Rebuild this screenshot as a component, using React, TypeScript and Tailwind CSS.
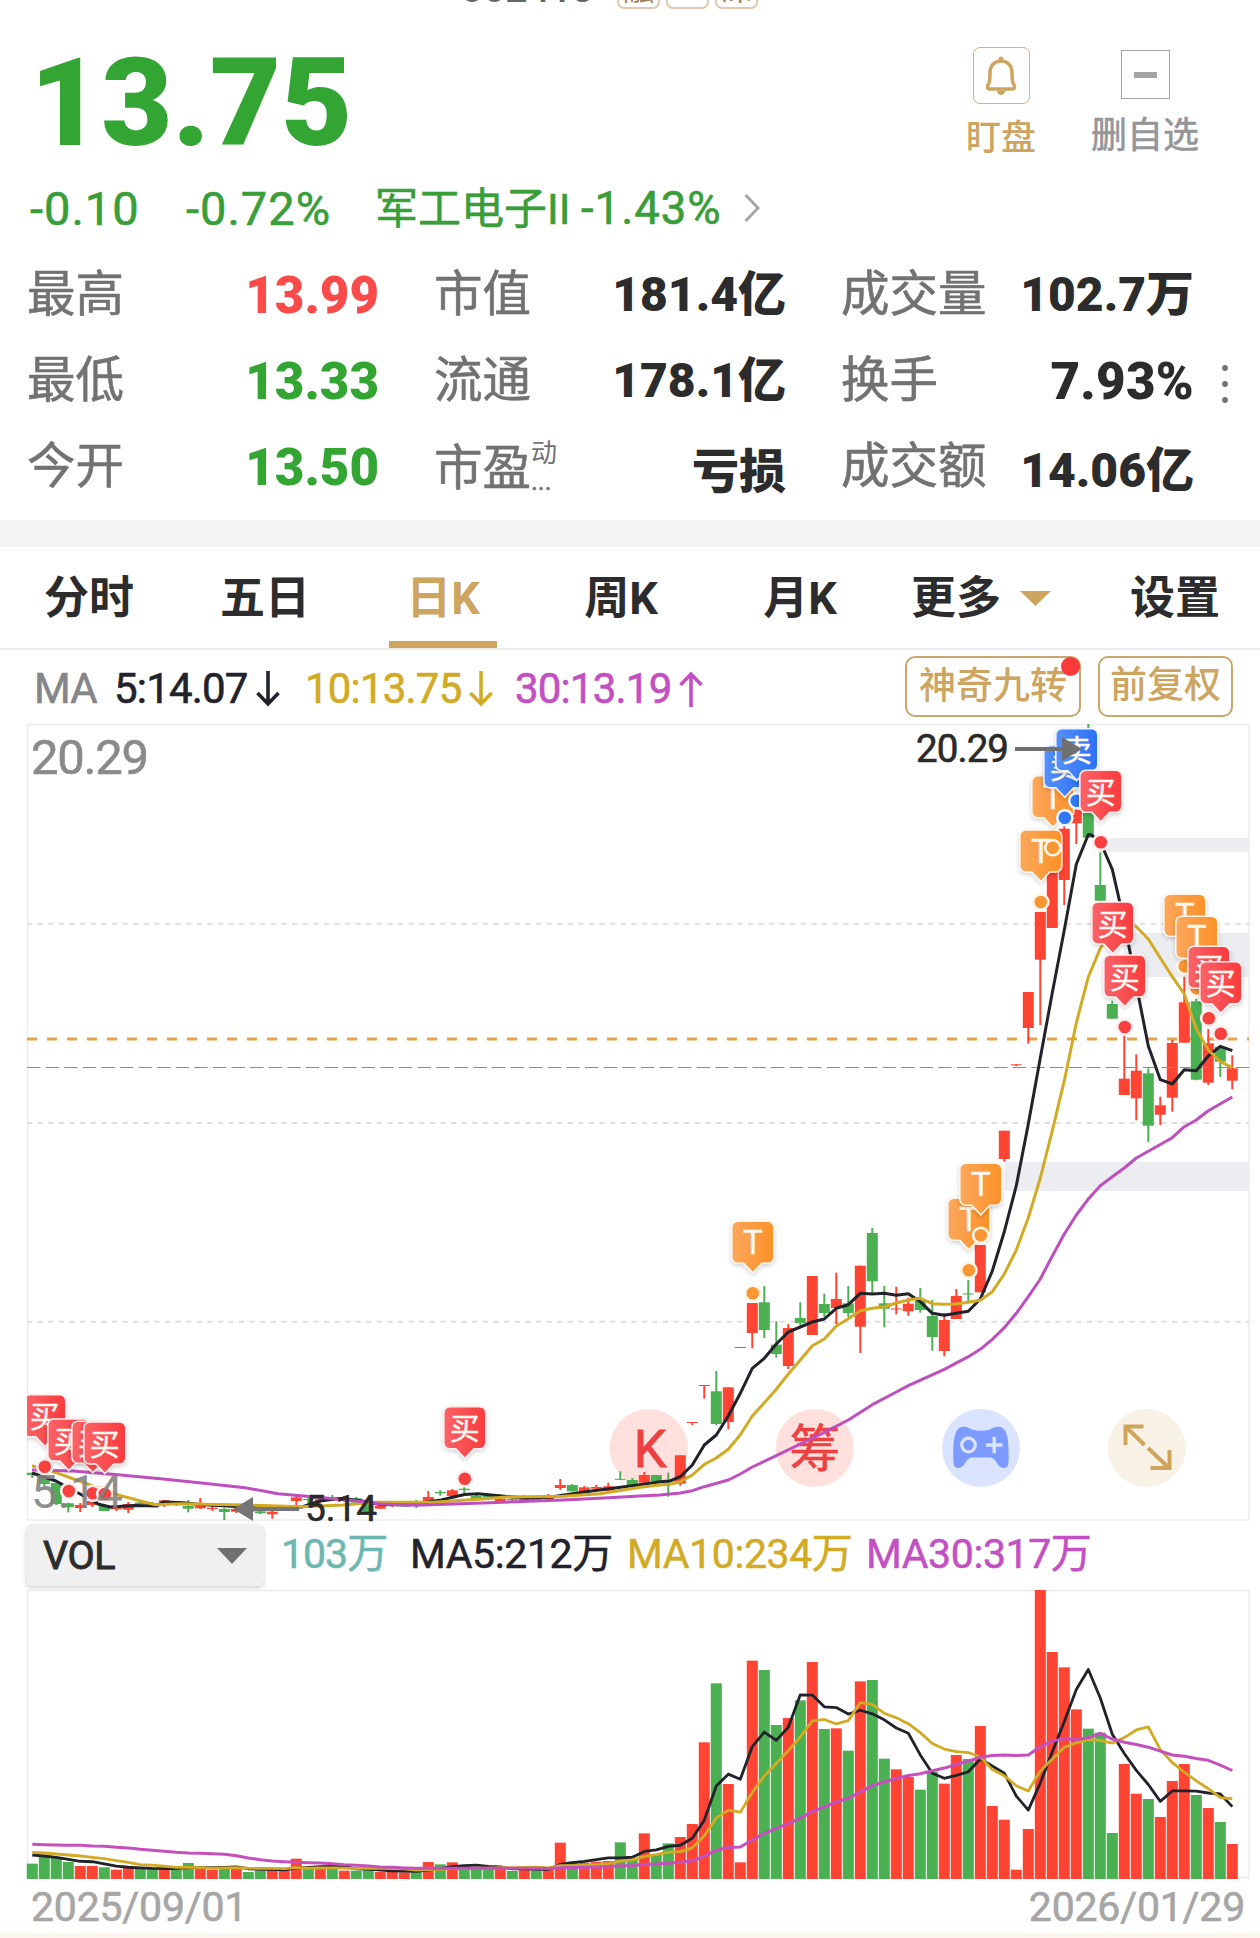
import type { ReactNode } from "react";

type Candle = [high: number, top: number, bottom: number, low: number];
type Point = [x: number, y: number];
type Trade = { i: number; y: number; kind: "T" | "买" | "卖" };

const RED = "#ff4433";
const GREEN = "#4bb052";
const GOLD = "#cda561";

const FONT = "font-[Roboto,'Noto_Sans_CJK_SC',sans-serif]";

const barX = (i: number) => 32.3 + i * 12;

const stats = [
  { label: "最高", value: "13.99", color: "text-[51px] text-[#fb4a4a]" },
  { label: "市值", value: "181.4亿", color: "text-[48px] text-[#2c2c2c]" },
  { label: "成交量", value: "102.7万", color: "text-[48px] text-[#2c2c2c]" },
  { label: "最低", value: "13.33", color: "text-[51px] text-[#33a532]" },
  { label: "流通", value: "178.1亿", color: "text-[48px] text-[#2c2c2c]" },
  { label: "换手", value: "7.93%", color: "text-[51px] tracking-[0.3px] text-[#2c2c2c]" },
  { label: "今开", value: "13.50", color: "text-[51px] text-[#33a532]" },
  { label: "市盈", value: "亏损", color: "pt-2 text-[47px] text-[#2c2c2c]", note: "动" },
  { label: "成交额", value: "14.06亿", color: "pt-2 text-[48px] text-[#2c2c2c]" },
];

// g = closed down, r = closed up
const directions =
  "ggggrrgrrg" +
  "grggrrgrgg" +
  "rrrgrgrggr" +
  "rrgrgrgggr" +
  "grgrrgrrrg" +
  "grggrrrgrr" +
  "rggrgrgrgr" +
  "ggrrggrrgr" +
  "rrrrrrrrgg" +
  "grrgrrrgrg" +
  "r";

// in 万
const volumes = [
  46, 67, 63, 51, 39, 39, 35, 28, 35, 31, 30, 33, 28, 48, 33, 28, 37, 35, 21, 25, 28, 27, 61, 34, 35, 33, 25, 25, 31,
  21, 21, 20, 21, 51, 44, 50, 33, 31, 31, 35, 24, 31, 25, 29, 109, 52, 49, 52, 54, 110, 61, 137, 75, 107, 126, 165,
  410, 587, 285, 50, 655, 627, 462, 483, 536, 651, 450, 452, 385, 593, 597, 361, 329, 306, 268, 322, 286, 372, 360,
  459, 219, 178, 28, 150, 867, 681, 635, 509, 451, 439, 138, 345, 256, 240, 186, 294, 345, 252, 213, 171, 105,
];

// averages of the days whose window starts before the first bar
const volumeSeeds: Record<number, number[]> = {
  5: [72, 69, 65, 59],
  10: [80, 78, 75, 72, 69, 65, 61, 55, 50],
  30: [
    104, 103, 102, 101, 101, 99, 98, 95, 93, 89, 86, 83, 80, 78, 77, 76, 74, 70, 63, 58, 54, 52, 50, 49, 48, 46, 43, 41,
    39,
  ],
};

const candles: (Candle | null)[] = [
  [1472.7, 1472.7, 1475, 1478],
  [1477, 1477, 1484, 1486],
  [1483, 1483, 1504, 1505],
  [1502.7, 1503.3, 1507.3, 1512.3],
  [1503, 1505, 1508, 1512],
  [1500, 1501, 1505, 1507],
  [1504, 1505, 1511, 1511],
  [1506, 1507.7, 1509.3, 1511],
  [1502, 1504, 1509.7, 1513],
  [1501, 1502.5, 1504, 1506],
  [1502, 1503, 1505, 1507],
  [1500, 1500.3, 1502.7, 1507],
  [1501, 1503, 1505, 1506],
  [1500, 1506, 1508.7, 1512.3],
  [1498, 1506, 1508.3, 1509],
  [1503, 1507.7, 1509, 1511],
  [1507.7, 1509, 1512, 1520],
  [1507, 1509, 1511.7, 1513],
  [1508, 1509, 1512, 1514],
  [1509, 1511.3, 1513.3, 1514],
  [1510, 1511.7, 1514.3, 1518.7],
  [1505, 1505.5, 1508, 1509],
  [1496.7, 1497.3, 1501, 1505],
  [1498, 1499, 1500, 1505],
  [1498, 1499.3, 1502, 1503],
  [1495, 1498.3, 1500, 1501],
  [1496, 1498, 1501, 1502],
  [1497, 1498.3, 1502.7, 1503],
  [1502, 1502.7, 1512, 1513],
  [1505, 1506, 1508.7, 1509],
  [1502, 1503.3, 1505.3, 1507],
  [1501, 1502.7, 1505, 1506],
  [1500, 1502, 1505, 1508],
  [1491, 1497, 1501.7, 1501.7],
  [1490.3, 1492, 1493.3, 1495.7],
  [1489, 1490.3, 1496, 1496],
  [1486.7, 1488.7, 1490, 1493],
  [1495, 1496, 1500, 1500],
  [1495, 1496, 1498.7, 1500],
  [1497, 1498.7, 1502, 1503],
  [1497, 1499, 1500, 1503],
  [1495, 1496.7, 1500, 1500],
  [1496, 1497.3, 1500.7, 1501],
  [1494, 1496, 1499, 1501],
  [1479, 1485, 1488, 1490],
  [1484, 1485, 1491.3, 1491.3],
  [1486, 1487.3, 1491.3, 1491.3],
  [1484.7, 1487, 1488.7, 1491],
  [1482.7, 1486.3, 1490.7, 1491.7],
  [1471.3, 1478.8, 1479.8, 1480],
  [1478, 1480, 1485.7, 1486.7],
  [1472, 1475, 1482.7, 1482.7],
  [1475, 1475, 1481, 1481],
  [1472.7, 1483, 1484, 1496.7],
  [1455.3, 1455.3, 1483.7, 1485.7],
  [1422, 1422, 1423, 1425],
  [1385, 1385, 1386, 1398.7],
  [1371, 1391.3, 1424, 1425.3],
  [1387.3, 1387.3, 1422, 1429.3],
  [1347, 1347, 1348, 1348],
  [1303, 1303, 1333, 1348.3],
  [1286, 1302.3, 1330, 1338],
  [1321.3, 1344.7, 1354, 1357.7],
  [1324, 1328, 1366, 1369],
  [1302.3, 1318, 1323, 1325],
  [1276, 1276, 1335, 1335],
  [1293.7, 1304, 1313, 1316.7],
  [1272.7, 1299, 1308, 1324],
  [1286, 1303.3, 1313, 1317],
  [1265.7, 1265.7, 1326.7, 1353],
  [1228, 1233, 1281.3, 1294],
  [1286, 1303.3, 1308.7, 1327.3],
  [1286.7, 1308.5, 1309.5, 1314.3],
  [1297.7, 1303.7, 1311.3, 1315.7],
  [1288, 1301, 1310, 1312.7],
  [1300, 1316, 1337, 1350.7],
  [1313, 1320, 1351, 1356.3],
  [1289, 1296, 1319, 1319],
  [1280, 1293.5, 1294.5, 1302],
  [1245, 1245, 1292.3, 1292.3],
  null,
  [1130.7, 1130.7, 1159, 1161.7],
  [1064, 1064.3, 1065.3, 1066],
  [992, 992, 1028, 1043.7],
  [912, 912, 959.7, 1025],
  [850, 850, 928, 928],
  [826, 828.7, 880, 905],
  [800, 810, 823.3, 844],
  [724, 813, 837.7, 837.7],
  [852.3, 885, 900.7, 900.7],
  [1000.7, 1004, 1018.7, 1018.7],
  [1033, 1078.7, 1095, 1095],
  [1054.3, 1070.7, 1098.3, 1120.3],
  [1068.3, 1073.3, 1125.7, 1142],
  [1096.7, 1105.3, 1114.7, 1125],
  [1040, 1043, 1097.7, 1111.7],
  [976.7, 1002.3, 1042.7, 1042.7],
  [998.7, 1001.3, 1079.7, 1080.3],
  [1029, 1043.3, 1082.7, 1085],
  [1046, 1046.7, 1061.7, 1077],
  [1055.3, 1068.3, 1080.7, 1089.3],
];

const ma5: Point[] = [
  [32, 1473], [44, 1477], [56, 1481], [80, 1494], [98, 1504], [110, 1507], [135, 1505.5], [157, 1506], [163, 1502],
  [180, 1502.5], [200, 1504.5], [245, 1507], [278, 1508.5], [302, 1507], [320, 1501], [339, 1498.5], [359, 1500.5],
  [380, 1504.5], [408, 1505], [441, 1500], [464.5, 1494.5], [478, 1493.7], [502, 1496], [527, 1498], [551, 1497],
  [584, 1492], [640, 1484.7], [660, 1481.7], [670, 1481], [680.3, 1476.7], [692.3, 1465], [704.3, 1445],
  [716.3, 1435], [728.3, 1416], [740.3, 1393.3], [752.3, 1368.3], [764.3, 1358.3], [776.3, 1344], [788.3, 1332],
  [800.3, 1327], [812.3, 1322], [824.3, 1319], [836.3, 1308.3], [848.3, 1304.7], [860.3, 1293.3], [872.3, 1294],
  [884.3, 1293.3], [896.3, 1295.3], [908.3, 1293.7], [920.3, 1301.7], [932.3, 1313.3], [944.3, 1315.3],
  [956.3, 1313.3], [968.3, 1311.3], [980.3, 1299], [992.3, 1271], [1004.3, 1231.7], [1016.3, 1185.7],
  [1028.3, 1124], [1040.3, 1058], [1052.3, 992.7], [1064.3, 930], [1076.3, 864.3], [1088.3, 834.5], [1092, 835.3],
  [1100.3, 842], [1112.3, 869.3], [1124.3, 922], [1136.3, 985], [1148.3, 1046], [1160.3, 1079.7], [1172.3, 1084],
  [1184.3, 1069.7], [1196.3, 1070.7], [1208.3, 1056], [1220.3, 1046.3], [1232.3, 1050.7],
];

const ma10: Point[] = [
  [32, 1465.7], [56, 1472.7], [82, 1482], [118, 1495], [155, 1504.7], [180, 1503.7], [245, 1505], [302, 1506.7],
  [343, 1505], [376, 1502.3], [433, 1502.3], [482, 1499], [506, 1497], [563, 1496.3], [600, 1493.7], [640, 1487.3],
  [660, 1485], [670, 1484.3], [680.3, 1481.7], [692.3, 1475], [704.3, 1464.3], [716.3, 1458], [728.3, 1449.3],
  [740.3, 1434.7], [752.3, 1416], [764.3, 1402.7], [776.3, 1389.3], [788.3, 1374], [800.3, 1360], [812.3, 1345.7],
  [824.3, 1339], [836.3, 1326], [848.3, 1318.7], [860.3, 1310.7], [872.3, 1308.3], [884.3, 1306.7], [896.3, 1303],
  [908.3, 1300], [920.3, 1298.3], [932.3, 1303.7], [944.3, 1304.3], [956.3, 1304], [968.3, 1302.3],
  [980.3, 1300.3], [992.3, 1291.7], [1004.3, 1274], [1016.3, 1250], [1028.3, 1217.7], [1040.3, 1178],
  [1052.3, 1130.7], [1064.3, 1080.7], [1076.3, 1023], [1088.3, 977], [1100.3, 948.3], [1112.3, 930],
  [1124.3, 919], [1136.3, 926.7], [1148.3, 939], [1160.3, 958], [1172.3, 976.7], [1184.3, 994], [1196.3, 1029],
  [1208.3, 1050], [1220.3, 1061.7], [1232.3, 1067.7],
];

const ma30: Point[] = [
  [32, 1470], [73, 1471], [118, 1474.7], [163, 1479], [204, 1483.3], [245, 1487.7], [278, 1493.7], [318, 1497.3],
  [359, 1501.3], [380, 1504], [416, 1505.3], [490, 1502.7], [563, 1500], [604, 1498], [640, 1496], [660, 1495],
  [680.3, 1493], [692.3, 1490.7], [704.3, 1486.7], [728.3, 1480], [740.3, 1474], [752.3, 1467], [776.3, 1455.7],
  [800.3, 1444], [824.3, 1432.3], [848.3, 1420], [872.3, 1404.7], [896.3, 1392], [908.3, 1385.7], [944.3, 1369.3],
  [968.3, 1356.7], [980.3, 1349.3], [992.3, 1339.3], [1004.3, 1327.7], [1016.3, 1313.3], [1028.3, 1296.7],
  [1040.3, 1279], [1052.3, 1256], [1064.3, 1234], [1076.3, 1215], [1088.3, 1199], [1100.3, 1185.7],
  [1112.3, 1176.7], [1124.3, 1168], [1136.3, 1158], [1172.3, 1137.7], [1184.3, 1126.7], [1196.3, 1120],
  [1208.3, 1110.7], [1232.3, 1097],
];

const trades: Trade[] = [
  { i: 1, y: 1466.7, kind: "买" },
  { i: 3, y: 1491, kind: "买" },
  { i: 5, y: 1493.3, kind: "买" },
  { i: 6, y: 1494, kind: "买" },
  { i: 36, y: 1478.7, kind: "买" },
  { i: 60, y: 1293.3, kind: "T" },
  { i: 78, y: 1270.3, kind: "T" },
  { i: 79, y: 1235.3, kind: "T" },
  { i: 84, y: 902, kind: "T" },
  { i: 85, y: 847.7, kind: "T" },
  { i: 86, y: 817.7, kind: "卖" },
  { i: 87, y: 800.7, kind: "卖" },
  { i: 89, y: 842.3, kind: "买" },
  { i: 90, y: 974, kind: "买" },
  { i: 91, y: 1027, kind: "买" },
  { i: 96, y: 966.3, kind: "T" },
  { i: 97, y: 988.3, kind: "T" },
  { i: 98, y: 1018.3, kind: "买" },
  { i: 99, y: 1033.7, kind: "买" },
];

const tradeStyle = {
  T: { fill: "url(#tradeT)", dot: "#fb9733", ring: "#fff6ea" },
  买: { fill: "url(#tradeBuy)", dot: "#f8413f", ring: "#ffeeee" },
  卖: { fill: "url(#tradeSell)", dot: "#2f78f5", ring: "#eef4ff" },
};

function volumeAverage(days: number): Point[] {
  return volumes.map((_, i) => {
    const seed = volumeSeeds[days][i];
    const avg = seed ?? volumes.slice(i - days + 1, i + 1).reduce((a, b) => a + b, 0) / days;
    return [barX(i), 1879 - avg / 3];
  });
}

function Line({ points, color, width = 3 }: { points: Point[]; color: string; width?: number }) {
  return (
    <polyline
      points={points.map((p) => p.join(",")).join(" ")}
      fill="none"
      stroke={color}
      strokeWidth={width}
      strokeLinejoin="round"
    />
  );
}

function TradeMarker({ i, y, kind }: Trade) {
  const style = tradeStyle[kind];
  return (
    <g transform={`translate(${barX(i) + 0.5} ${y})`}>
      <circle r="7.6" fill={style.dot} stroke={style.ring} strokeWidth="2.6" />
      <path
        d="M-15-72h30a6 6 0 0 1 6 6v30a6 6 0 0 1-6 6h-6l-9 9.500-9-9.500h-6a6 6 0 0 1-6-6v-30a6 6 0 0 1 6-6z"
        fill={style.fill}
        stroke={style.ring}
        strokeWidth="1.6"
        filter="url(#tradeShadow)"
      />
      <text
        y={kind === "T" ? -39 : -39.5}
        textAnchor="middle"
        fontSize={kind === "T" ? 33 : 30}
        fill="#fff8f0"
        stroke="#fff8f0"
        strokeWidth="0.5"
        className={FONT}
      >
        {kind}
      </text>
    </g>
  );
}

function PriceChart() {
  return (
    <svg className="block h-[800px] w-full" viewBox="0 722 1260 800">
      <defs>
        <linearGradient id="tradeT">
          <stop offset="0" stopColor="#fba75c" />
          <stop offset="1" stopColor="#fb9128" />
        </linearGradient>
        <linearGradient id="tradeBuy">
          <stop offset="0" stopColor="#fa6368" />
          <stop offset="1" stopColor="#f93a3c" />
        </linearGradient>
        <linearGradient id="tradeSell">
          <stop offset="0" stopColor="#5590fa" />
          <stop offset="1" stopColor="#2b70f5" />
        </linearGradient>
        <filter id="tradeShadow" x="-30%" y="-30%" width="160%" height="160%">
          <feDropShadow dx="0" dy="2" stdDeviation="2" floodOpacity="0.18" />
        </filter>
        <clipPath id="plot">
          <rect x="27" y="722" width="1223" height="800" />
        </clipPath>
      </defs>

      <rect x="1100" y="838" width="149" height="14" fill="#ecedf1" />
      <rect x="1124" y="933" width="125" height="44" fill="#ecedf1" />
      <rect x="1005" y="1162" width="244" height="29" fill="#ecedf1" />
      <rect x="27.500" y="724.500" width="1221.500" height="795.500" fill="none" stroke="#ececec" strokeWidth="1.500" />
      {[923.7, 1123, 1321.7].map((y) => (
        <line key={y} x1="27" x2="1249" y1={y} y2={y} stroke="#dedede" strokeWidth="2" strokeDasharray="5.300 5.300" />
      ))}

      {/* quick actions */}
      <circle cx="648.8" cy="1448" r="39" fill="#ffe0dd" />
      <text x="650" y="1467" textAnchor="middle" fontSize="52" fill="#ed4141" stroke="#ed4141" className="font-[Roboto,sans-serif]">
        K
      </text>
      <circle cx="814.8" cy="1448" r="39" fill="#ffe0dd" />
      <text x="814.8" y="1467" textAnchor="middle" fontSize="51" fill="#ed4141" stroke="#ed4141" strokeWidth="0.500" className="font-['Noto_Sans_CJK_SC',sans-serif]">
        筹
      </text>
      <circle cx="981" cy="1448" r="39" fill="#dae3ff" />
      <path
        d="M962 1427c4-1 7 1 10 2.500q9 2.500 18 0c3-1.500 6-3.500 10-2.500 6 1 9 9 8.700 30 0 8-1 11-5 11-7 0-7-10.500-13.700-10.500h-18c-6.700 0-6.700 10.500-13.700 10.500-4 0-5-3-5-11-.300-21 2.700-29 8.700-30z"
        fill="#7d9bff"
      />
      <circle cx="968.5" cy="1445" r="6.800" fill="none" stroke="#dae3ff" strokeWidth="3.200" />
      <path d="M986 1445h16.500M994.200 1436.700v16.500" stroke="#dae3ff" strokeWidth="3.400" />
      <circle cx="1146.700" cy="1448" r="39" fill="#f8f2e6" />
      <path
        d="M1125.500 1445v-18.500h18M1126 1427l18.500 18M1169.500 1450v18h-19M1169 1468l-21-20"
        fill="none"
        stroke="#d1a45c"
        strokeWidth="4"
      />

      <line x1="27" x2="1249" y1="1039" y2="1039" stroke="#e2a349" strokeWidth="3" strokeDasharray="10 10" />

      {candles.map((candle, i) => {
        if (!candle) return null;
        const [high, top, bottom, low] = candle;
        const color = directions[i] === "r" ? RED : GREEN;
        return (
          <g key={i}>
            <rect x={barX(i) - 1} y={high} width="2" height={low - high} fill={color} />
            <rect x={barX(i) - 5.5} y={top} width="11" height={bottom - top} fill={color} />
          </g>
        );
      })}

      <line x1="27" x2="1249" y1="1067.500" y2="1067.500" stroke="#8c8c8c" strokeWidth="1.200" strokeDasharray="13.300 5.300" />

      <Line points={ma5} color="#22222b" />
      <Line points={ma10} color="#d3aa24" />
      <Line points={ma30} color="#bf4fbf" />

      <g clipPath="url(#plot)">
        {trades.map((trade) => (
          <TradeMarker key={trade.i} {...trade} />
        ))}
      </g>

      <g className="font-[Roboto,sans-serif]">
        <text x="31" y="774" fontSize="49" textLength="118" fill="#8a8a8a" stroke="#8a8a8a" strokeWidth="0.600">
          20.29
        </text>
        <text x="31" y="1508" fontSize="47" textLength="92" fill="#808080" fillOpacity="0.9">
          5.14
        </text>
        <text x="916" y="761.500" fontSize="38.500" textLength="93" fill="#2a2a2a" stroke="#2a2a2a" strokeWidth="0.600">
          20.29
        </text>
        <text x="305" y="1521" fontSize="37" textLength="72" fill="#2a2a2a" stroke="#2a2a2a" strokeWidth="0.600">
          5.14
        </text>
      </g>
      <path d="M1015 747h47v-10l20 12-20 12v-10h-47z" fill="#707070" />
      <path d="M299 1507h-46v-10l-20 12 20 12v-10h46z" fill="#757575" />
    </svg>
  );
}

function VolumeChart() {
  return (
    <svg className="block h-[295px] w-full" viewBox="0 1587 1260 295">
      <rect x="27.500" y="1590.500" width="1221.500" height="287" fill="none" stroke="#ececec" strokeWidth="1.500" />
      {volumes.map((v, i) => (
        <rect
          key={i}
          x={barX(i) - 5.5}
          y={1879 - v / 3}
          width="11"
          height={v / 3}
          fill={directions[i] === "r" ? RED : GREEN}
        />
      ))}
      <Line points={volumeAverage(5)} color="#22222b" width={2.8} />
      <Line points={volumeAverage(10)} color="#d3aa24" width={2.8} />
      <Line points={volumeAverage(30)} color="#c44fbd" />
    </svg>
  );
}

function Arrow({ up }: { up?: boolean }) {
  return (
    <svg className="ml-2 h-9 w-6" viewBox="0 0 24 36" fill="none" stroke="currentColor" strokeWidth="3.6">
      <path d={up ? "M12 36V3M1.500 14 12 3l10.500 11" : "M12 0v33M1.500 22 12 33l10.500-11"} />
    </svg>
  );
}

function Badge({ children }: { children: ReactNode }) {
  return (
    <span className="flex h-[42px] w-[43px] items-center justify-center rounded-[7px] border-2 border-[#e3c9ae] pt-[3px] text-[31px] leading-none text-[#a17d5c]">
      {children}
    </span>
  );
}

function Tab({ className, children, active }: { className: string; children: ReactNode; active?: boolean }) {
  return (
    <div
      className={`flex h-[101px] shrink-0 items-center justify-center border-b-[7px] pt-[9px] text-[45px] leading-none ${
        active ? "border-[#cda561] text-[#cda561]" : "border-transparent text-[#2c2c2c]"
      } ${className}`}
    >
      {children}
    </div>
  );
}

export default function App() {
  return (
    <main className={`h-[1938px] w-[1260px] overflow-hidden bg-white whitespace-nowrap ${FONT}`}>
      <div className="flex h-[9px] items-end pl-[461px]">
        <span className="mr-[22px] w-[134px] text-[39px] leading-[40px] font-medium text-[#666]">002413</span>
        <div className="flex gap-[6px]">
          <Badge>融</Badge>
          <Badge>L2</Badge>
          <Badge>深</Badge>
        </div>
      </div>

      <header className="flex h-[161px] justify-between pr-[61px] pl-[30px]">
        <h1 className="mt-[34px] text-[123px] leading-[120px] font-black text-[#33a532]">13.75</h1>
        <div className="flex">
          <div className="mr-[55px] flex w-[70px] flex-col items-center pt-[38px] text-[#cda561]">
            <div className="flex size-[57px] items-center justify-center rounded-[7px] border-[1.5px] border-[#d3b27b]">
              <svg className="h-10 w-8" viewBox="0 0 32 40" fill="none" stroke={GOLD} strokeWidth="3.6">
                <path
                  d="M5 33c-3 0-3-3-1.500-5 1.500-2 1.500-4 1.500-11C5 9 10 5 16 5s11 4 11 12c0 7 0 9 1.500 11 1.500 2 1.500 5-1.500 5z"
                  strokeLinejoin="round"
                />
                <circle cx="16" cy="3" r="2.400" fill={GOLD} stroke="none" />
                <path d="M11.500 34.500h9q-1.500 4.500-4.500 4.500t-4.500-4.500z" fill={GOLD} stroke="none" />
              </svg>
            </div>
            <span className="mt-[17px] text-[35px] leading-[36px] font-medium">盯盘</span>
          </div>
          <div className="flex w-[108px] flex-col items-center pt-[41px] text-[#949699]">
            <div className="flex size-[49px] items-center justify-center border-[1.5px] border-[#a3a3a3]">
              <span className="h-[6px] w-[23px] bg-[#a3a3a3]" />
            </div>
            <span className="mt-[19px] text-[36px] leading-[36px] [-webkit-text-stroke:0.6px]">删自选</span>
          </div>
        </div>
      </header>

      <div className="flex h-[76px] items-center pl-[30px] text-[47px] leading-none tracking-[1px] text-[#3a9e38] [-webkit-text-stroke:0.6px]">
        <span className="w-[156px]">-0.10</span>
        <span className="w-[189px]">-0.72%</span>
        <span className="w-[206px] pt-[3px] text-[43px] tracking-normal">军工电子II</span>
        <span className="w-[163px] pt-[2px] text-[45.5px]">-1.43%</span>
        <svg className="h-7 w-4" viewBox="0 0 16 28" fill="none" stroke="#a5a5a5" strokeWidth="3">
          <path d="M1.500 1 14 14 1.500 27" />
        </svg>
      </div>

      <section className="flex h-[274px] items-center pb-1 pl-[27px]">
        <dl className="grid grid-cols-[352px_352px_353px] grid-rows-[86px_86px_86px] gap-x-[55px]">
          {stats.map((s) => (
            <div key={s.label} className="flex items-center justify-between leading-none">
              <dt
                className={`flex text-[48.5px] text-[#727272] [-webkit-text-stroke:0.6px] ${s.note ? "pt-[5px]" : ""}`}
              >
                {s.label}
                {s.note && (
                  <span className="-mt-[5px] flex flex-col text-[26px] [-webkit-text-stroke:0px]">
                    <span className="h-[35px] leading-none">{s.note}</span>
                    <span className="leading-[12px] [-webkit-text-stroke:0.6px]">...</span>
                  </span>
                )}
              </dt>
              <dd className={`font-black ${s.color}`}>{s.value}</dd>
            </div>
          ))}
        </dl>
        <div className="ml-[28px] flex flex-col gap-[10px] pt-[6px]">
          <i className="size-[6px] rounded-full bg-[#777]" />
          <i className="size-[6px] rounded-full bg-[#777]" />
          <i className="size-[6px] rounded-full bg-[#777]" />
        </div>
      </section>

      <div className="h-[27px] bg-[#f3f3f5]" />

      <nav className="flex h-[103px] border-b-2 border-[#ececec] pl-[35px] font-bold">
        <Tab className="w-[108px]">分时</Tab>
        <Tab className="ml-[68px] w-[108px]">五日</Tab>
        <Tab className="ml-[70px] w-[108px]" active>
          日K
        </Tab>
        <Tab className="ml-[70px] w-[108px]">周K</Tab>
        <Tab className="ml-[71px] w-[108px]">月K</Tab>
        <Tab className="ml-[57px] w-[140px]">
          更多
          <svg className="ml-[19px] h-[15px] w-[31px]" viewBox="0 0 31 15" fill={GOLD}>
            <path d="M0 0h31L15.500 15z" />
          </svg>
        </Tab>
        <Tab className="ml-[70px] w-[108px]">设置</Tab>
      </nav>

      <div className="flex h-[72px] items-center pl-[34px] text-[42px] leading-none tracking-[-0.8px]">
        <div className="flex pt-[5px] [-webkit-text-stroke:0.6px]">
          <span className="w-[80px] text-[#85868a]">MA</span>
          <span className="flex w-[191px] items-center text-[#22222b]">
            5:14.07
            <Arrow />
          </span>
          <span className="flex w-[210px] items-center text-[#d3aa24]">
            10:13.75
            <Arrow />
          </span>
          <span className="flex w-[390px] items-center text-[#c34fc3]">
            30:13.19
            <Arrow up />
          </span>
        </div>
        <button className="relative flex h-[61px] w-[176px] items-center justify-center rounded-[10px] border-2 border-[#c8a66c] text-[37px] font-medium tracking-normal text-[#cda561]">
          神奇九转
          <i className="absolute -top-px -right-px size-[19px] rounded-full bg-[#fb3b3b]" />
        </button>
        <button className="ml-[17px] flex h-[61px] w-[135px] items-center justify-center rounded-[10px] border-2 border-[#c8a66c] pb-[2px] text-[37px] font-medium tracking-normal text-[#cda561]">
          前复权
        </button>
      </div>

      <PriceChart />

      <div className="flex h-[65px] items-center pl-[26px] text-[41px] leading-none tracking-[-0.4px] [-webkit-text-stroke:0.5px]">
        <div className="flex h-[62px] w-[238px] items-center justify-between rounded-[6px] bg-[#f0f0f0] pt-[2px] pr-[17px] pl-[17px] text-[39.5px] text-[#2c2c2c] shadow-[0_2px_4px_rgba(0,0,0,0.18)] [-webkit-text-stroke:0.9px]">
          VOL
          <svg className="h-4 w-[30px]" viewBox="0 0 30 16" fill="#707070">
            <path d="M0 0h30L15 16z" />
          </svg>
        </div>
        <span className="ml-[17px] w-[129px] tracking-[-1px] text-[#6cb7b0]">103万</span>
        <span className="w-[217px] text-[#22222b]">MA5:212万</span>
        <span className="w-[239px] text-[#d3aa24]">MA10:234万</span>
        <span className="text-[#c34fc3]">MA30:317万</span>
      </div>

      <VolumeChart />

      <div className="flex h-[51px] items-center justify-between pr-[15px] pl-[31px] text-[41px] leading-none tracking-[-0.2px] text-[#a6a6a6] [-webkit-text-stroke:0.6px]">
        <span>2025/09/01</span>
        <span>2026/01/29</span>
      </div>
      <div className="h-[5px] bg-[#fdf6ee]" />
    </main>
  );
}
